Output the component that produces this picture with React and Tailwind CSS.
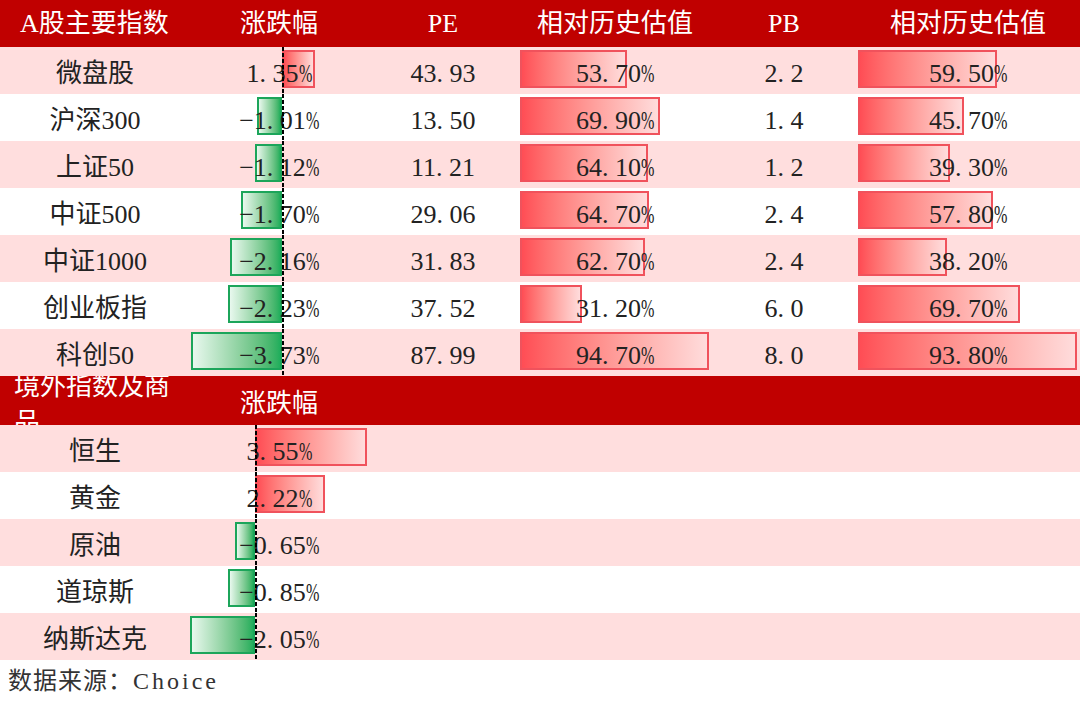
import React from 'react';

const upper = [
  { name: '微盘股', chg: 1.35, pe: '43.93', peRel: 53.7, pb: '2.2', pbRel: 59.5 },
  { name: '沪深300', chg: -1.01, pe: '13.50', peRel: 69.9, pb: '1.4', pbRel: 45.7 },
  { name: '上证50', chg: -1.12, pe: '11.21', peRel: 64.1, pb: '1.2', pbRel: 39.3 },
  { name: '中证500', chg: -1.7, pe: '29.06', peRel: 64.7, pb: '2.4', pbRel: 57.8 },
  { name: '中证1000', chg: -2.16, pe: '31.83', peRel: 62.7, pb: '2.4', pbRel: 38.2 },
  { name: '创业板指', chg: -2.23, pe: '37.52', peRel: 31.2, pb: '6.0', pbRel: 69.7 },
  { name: '科创50', chg: -3.73, pe: '87.99', peRel: 94.7, pb: '8.0', pbRel: 93.8 },
];

const lower = [
  { name: '恒生', chg: 3.55 },
  { name: '黄金', chg: 2.22 },
  { name: '原油', chg: -0.65 },
  { name: '道琼斯', chg: -0.85 },
  { name: '纳斯达克', chg: -2.05 },
];

const font = 'font-["Liberation_Serif","Noto_Sans_CJK_SC",serif]';

// SimSun-like number: period and percent take half an em
const Num = ({ text }) => {
  const parts = text.replace('-', '−').split('');
  return (
    <span className="whitespace-nowrap">
      {parts.map((c, i) =>
        c === '.' ? (
          <span key={i} className="inline-block w-[0.5em]">.</span>
        ) : c === '%' ? (
          <span key={i} className="inline-block w-[0.5em] origin-left scale-x-[0.62]">%</span>
        ) : (
          <span key={i}>{c}</span>
        )
      )}
    </span>
  );
};

const pct = (v) => `${v.toFixed(2)}%`;

const cell = 'relative flex items-center justify-center pt-[5px]';
const redBar = 'border-2 border-[#f0525c] bg-linear-to-r from-[#ff4d55] to-[#ffdcdc]';
const greenBar = 'border-2 border-[#1ca55a] bg-linear-to-r from-[#e8f8ee] to-[#1fae5c]';

const Axis = ({ left }) => (
  <div
    className="absolute top-0 bottom-0 z-20 w-[2px] bg-[repeating-linear-gradient(to_bottom,#000_0_4px,transparent_4px_6px)]"
    style={{ left }}
  />
);

const ChangeCell = ({ v, axis, scale }) => {
  const w = Math.abs(v) * scale;
  return (
    <div className={cell}>
      <div
        className={`absolute top-[3px] bottom-[6px] ${v >= 0 ? redBar : greenBar}`}
        style={v >= 0 ? { left: axis, width: w } : { left: axis - w, width: w }}
      />
      <span className="relative z-10">
        <Num text={pct(v)} />
      </span>
      <Axis left={axis} />
    </div>
  );
};

const RelCell = ({ v, scale }) => (
  <div className={cell}>
    <div className={`absolute left-[2px] top-[3px] bottom-[6px] ${redBar}`} style={{ width: v * scale }} />
    <span className="relative z-10">
      <Num text={pct(v)} />
    </span>
  </div>
);

const cols = 'grid grid-cols-[190px_178px_150px_194px_144px_224px]';

export default function App() {
  return (
    <div className={`w-[1080px] h-[704px] bg-white text-[26px] text-[#222] ${font}`}>
      {/* header A股 */}
      <div className={`${cols} h-[47px] bg-[#c00000] text-white`}>
        <div className="flex items-center pl-[20px]">A股主要指数</div>
        <div className="flex items-center justify-center">涨跌幅</div>
        <div className="flex items-center justify-center">PE</div>
        <div className="flex items-center justify-center">相对历史估值</div>
        <div className="flex items-center justify-center">PB</div>
        <div className="flex items-center justify-center">相对历史估值</div>
      </div>

      {upper.map((r, i) => (
        <div key={r.name} className={`${cols} h-[47px] ${i % 2 === 0 ? 'bg-[#ffdede]' : 'bg-white'}`}>
          <div className={cell}>{r.name}</div>
          <ChangeCell v={r.chg} axis={92} scale={24.3} />
          <div className={cell}>
            <Num text={r.pe} />
          </div>
          <RelCell v={r.peRel} scale={2} />
          <div className={cell}>
            <Num text={r.pb} />
          </div>
          <RelCell v={r.pbRel} scale={2.33} />
        </div>
      ))}

      {/* header 境外 (text wraps and is clipped like the source sheet) */}
      <div className={`${cols} h-[49px] bg-[#c00000] text-white`}>
        <div className="overflow-hidden pl-[14px]">
          <div className="-mt-[7px] leading-[36px]">
            <div>境外指数及商</div>
            <div>品</div>
          </div>
        </div>
        <div className="flex items-center justify-center pt-[6px]">涨跌幅</div>
      </div>

      {lower.map((r, i) => (
        <div key={r.name} className={`${cols} h-[47px] ${i % 2 === 0 ? 'bg-[#ffdede]' : 'bg-white'}`}>
          <div className={cell}>{r.name}</div>
          <ChangeCell v={r.chg} axis={65} scale={31.5} />
        </div>
      ))}

      <div className="pl-[8px] pt-[3px] text-[24px] text-[#333] tracking-[1px]">
        数据来源：<span className="tracking-[3px]"><Num text="Choice" /></span>
      </div>
    </div>
  );
}
